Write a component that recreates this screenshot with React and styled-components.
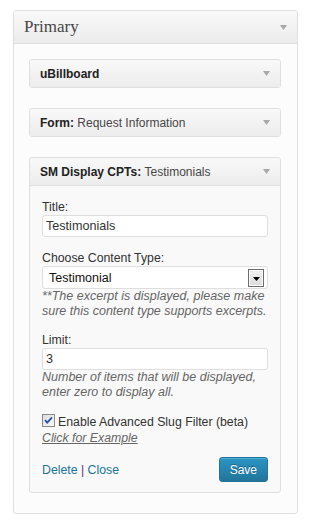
import React from 'react';
import styled, { createGlobalStyle } from 'styled-components';

const GlobalStyle = createGlobalStyle`
  body {
    margin: 0;
    background: #fff;
    font-family: 'Liberation Sans', Arial, sans-serif;
    font-size: 12px;
    color: #333;
  }
`;

const Page = styled.div`
  padding: 10px 11px 11px 13px;
`;

const Sidebar = styled.section`
  width: 285px;
  box-sizing: border-box;
  border: 1px solid #dfdfdf;
  border-radius: 3px;
  background: #fcfcfc;
`;

const SidebarHeader = styled.div`
  height: 32px;
  display: flex;
  align-items: center;
  justify-content: space-between;
  padding: 0 10px;
  border-bottom: 1px solid #dfdfdf;
  border-radius: 3px 3px 0 0;
  background: linear-gradient(to bottom, #f9f9f9, #ececec);
  h3 {
    margin: 0;
    font-family: 'Liberation Serif', 'Times New Roman', serif;
    font-size: 17px;
    font-weight: normal;
    color: #464646;
  }
`;

const SidebarBody = styled.div`
  display: flex;
  flex-direction: column;
  gap: 20px;
  padding: 15px 16px 20px 15px;
`;

const Widget = styled.div`
  border: 1px solid #dfdfdf;
  border-radius: 3px;
  background: #f9f9f9;
`;

const WidgetTop = styled.div`
  height: 27px;
  display: flex;
  align-items: center;
  justify-content: space-between;
  padding: 0 10px;
  border-radius: 3px 3px 0 0;
  background: linear-gradient(to bottom, #f9f9f9, #ececec);
  border-bottom: ${(p) => (p.$open ? '1px solid #dfdfdf' : 'none')};
  h4 {
    margin: 0;
    font-size: 12px;
    font-weight: bold;
    color: #222;
    white-space: nowrap;
    span {
      font-weight: normal;
      color: #464646;
    }
  }
`;

const WidgetInside = styled.div`
  padding: 14px 12px 10px;
  font-size: 12.3px;
`;

const Field = styled.div`
  margin-bottom: ${(p) => p.$gap}px;
`;

const Label = styled.label`
  display: block;
  line-height: 14px;
  margin-bottom: 1px;
  color: #333;
`;

const TextInput = styled.div`
  height: 22px;
  box-sizing: border-box;
  border: 1px solid #dfdfdf;
  border-radius: 3px;
  background: #fff;
  padding: 0 3px;
  display: flex;
  align-items: center;
  font-size: 12.6px;
  color: #333;
`;

const SelectBox = styled.div`
  height: 23px;
  box-sizing: border-box;
  border: 1px solid #dfdfdf;
  border-radius: 3px;
  background: #fff;
  padding: 0 3px 0 6px;
  display: flex;
  align-items: center;
  justify-content: space-between;
  font-size: 12.5px;
  color: #111;
`;

const DropButton = styled.span`
  width: 16px;
  height: 18px;
  box-sizing: border-box;
  border: 1px solid #6e6e6e;
  box-shadow: inset 0 0 0 1px #fff;
  background: linear-gradient(to bottom, #f2f2f2, #dcdcdc);
  display: flex;
  align-items: center;
  justify-content: center;
  padding-top: 2px;
`;

const Hint = styled.p`
  margin: 0 0 ${(p) => p.$after || 0}px;
  line-height: 15px;
  font-size: 12.5px;
  font-style: italic;
  color: #666;
`;

const CheckRow = styled.div`
  display: flex;
  align-items: flex-start;
  line-height: 16px;
  color: #333;
  svg {
    margin-right: 3px;
    flex: none;
  }
`;

const ExampleLink = styled.a`
  display: block;
  line-height: 16px;
  font-style: italic;
  color: #666;
  text-decoration: underline;
`;

const Actions = styled.div`
  display: flex;
  justify-content: space-between;
  align-items: baseline;
  margin-top: 11px;
`;

const Links = styled.div`
  a {
    color: #21759b;
    text-decoration: none;
  }
  span {
    color: #6f2d83;
  }
`;

const SaveButton = styled.button`
  height: 25px;
  padding: 0 10px;
  border: 1px solid #21759b;
  border-radius: 3px;
  background: linear-gradient(to bottom, #2a95c5, #21759b);
  box-shadow: inset 0 1px 0 rgba(120, 200, 230, 0.5);
  color: #fff;
  font-family: 'Liberation Sans', Arial, sans-serif;
  font-size: 12px;
  text-shadow: 0 -1px 0 rgba(0, 0, 0, 0.3);
`;

const Arrow = () => (
  <svg width="7" height="5" viewBox="0 0 7 5">
    <path d="M0 0 H7 L3.5 5 Z" fill="#a8a8a8" />
  </svg>
);

const CheckBox = () => (
  <svg width="13" height="13" viewBox="0 0 13 13">
    <defs>
      <linearGradient id="cb" x1="0" y1="0" x2="1" y2="1">
        <stop offset="0" stopColor="#dcdcdc" />
        <stop offset="1" stopColor="#fafafa" />
      </linearGradient>
    </defs>
    <rect x="0.5" y="0.5" width="12" height="12" fill="url(#cb)" stroke="#8a8a8a" />
    <path d="M3 6.2 L5.2 8.6 L10 3.4" fill="none" stroke="#2a4fa6" strokeWidth="1.8" />
  </svg>
);

const ClosedWidget = ({ children }) => (
  <Widget>
    <WidgetTop>
      <h4>{children}</h4>
      <Arrow />
    </WidgetTop>
  </Widget>
);

const App = () => (
  <Page>
    <GlobalStyle />
    <Sidebar>
      <SidebarHeader>
        <h3>Primary</h3>
        <Arrow />
      </SidebarHeader>
      <SidebarBody>
        <ClosedWidget>uBillboard</ClosedWidget>
        <ClosedWidget>
          Form:
          {' '}
          <span>Request Information</span>
        </ClosedWidget>

        <Widget>
          <WidgetTop $open>
            <h4>
              SM Display CPTs:
              {' '}
              <span>Testimonials</span>
            </h4>
            <Arrow />
          </WidgetTop>
          <WidgetInside>
            <Field $gap={14}>
              <Label>Title:</Label>
              <TextInput>Testimonials</TextInput>
            </Field>
            <Field $gap={14}>
              <Label>Choose Content Type:</Label>
              <SelectBox>
                Testimonial
                <DropButton>
                  <svg width="7" height="4" viewBox="0 0 7 4">
                    <path d="M0 0 H7 L3.5 4 Z" fill="#000" />
                  </svg>
                </DropButton>
              </SelectBox>
              <Hint $after={3}>
                **The excerpt is displayed, please make sure this content type supports excerpts.
              </Hint>
            </Field>
            <Field $gap={14}>
              <Label>Limit:</Label>
              <TextInput>3</TextInput>
              <Hint $after={2}>
                Number of items that will be displayed, enter zero to display all.
              </Hint>
            </Field>
            <CheckRow>
              <CheckBox />
              Enable Advanced Slug Filter (beta)
            </CheckRow>
            <ExampleLink>Click for Example</ExampleLink>
            <Actions>
              <Links>
                <a href="#delete">Delete</a>
                {' '}
                <span>|</span>
                {' '}
                <a href="#close">Close</a>
              </Links>
              <SaveButton type="button">Save</SaveButton>
            </Actions>
          </WidgetInside>
        </Widget>
      </SidebarBody>
    </Sidebar>
  </Page>
);

export default App;
